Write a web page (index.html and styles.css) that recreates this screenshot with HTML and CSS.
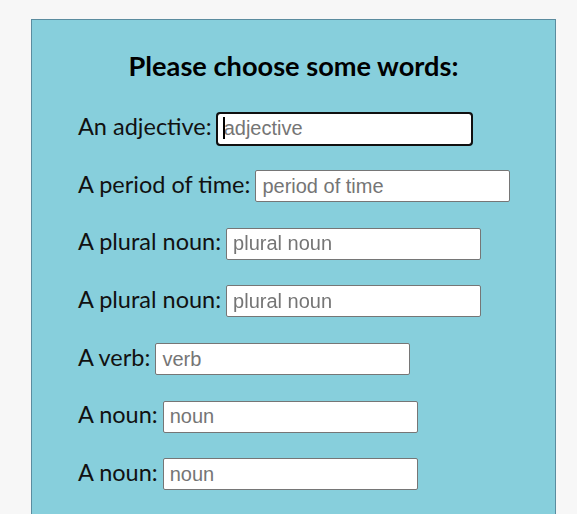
FILE: index.html
```html
<!DOCTYPE html>
<html lang="en">
<head>
<meta charset="utf-8">
<title>Mad Libs</title>
<link rel="stylesheet" href="styles.css">
</head>
<body>
<div class="card">
  <h2 class="title">Please choose some words:</h2>
  <form class="fields">
    <div class="row"><label for="w1">An adjective:</label><span class="field"><input id="w1" type="text" placeholder="adjective" autofocus><span class="caret"></span></span></div>
    <div class="row"><label for="w2">A period of time:</label><span class="field"><input id="w2" type="text" placeholder="period of time"></span></div>
    <div class="row"><label for="w3">A plural noun:</label><span class="field"><input id="w3" type="text" placeholder="plural noun"></span></div>
    <div class="row"><label for="w4">A plural noun:</label><span class="field"><input id="w4" type="text" placeholder="plural noun"></span></div>
    <div class="row"><label for="w5">A verb:</label><span class="field"><input id="w5" type="text" placeholder="verb"></span></div>
    <div class="row"><label for="w6">A noun:</label><span class="field"><input id="w6" type="text" placeholder="noun"></span></div>
    <div class="row"><label for="w7">A noun:</label><span class="field"><input id="w7" type="text" placeholder="noun"></span></div>
  </form>
</div>
</body>
</html>
```

FILE: styles.css
```css
html, body {
  margin: 0;
  padding: 0;
  background: #f7f7f7;
}
body {
  padding: 19px 0 0 31px;
  font-family: Lato, "Open Sans", sans-serif;
  color: #111;
}
.card {
  box-sizing: border-box;
  width: 525px;
  min-height: 600px;
  background: #87cfdc;
  border: 1px solid #5b8c9f;
  padding: 30px 20px 0 46px;
}
.title {
  margin: 0 0 0 -26px;
  text-align: center;
  font-size: 27.2px;
  font-weight: 700;
  line-height: 1.2;
  color: #000;
}
.fields {
  display: flex;
  flex-direction: column;
  gap: 25.6px;
  margin-top: 30px;
}
.row {
  display: flex;
  align-items: baseline;
  gap: 5px;
  font-size: 23.5px;
  line-height: 1;
}
.field {
  position: relative;
  display: inline-flex;
}
.row input {
  box-sizing: border-box;
  width: 255px;
  height: 32px;
  padding: 0 5px 0 6px;
  border: 1px solid #767676;
  border-radius: 2px;
  background: #fff;
  font-family: "Liberation Sans", Arial, sans-serif;
  font-size: 20px;
  color: #000;
  caret-color: transparent;
}
.row input::placeholder {
  color: #757575;
}
.row input:focus {
  outline: 2px solid #101010;
  outline-offset: -1px;
  border-radius: 3px;
}
.caret {
  position: absolute;
  left: 6px;
  top: 4px;
  width: 2px;
  height: 22px;
  background: #000;
}
```
